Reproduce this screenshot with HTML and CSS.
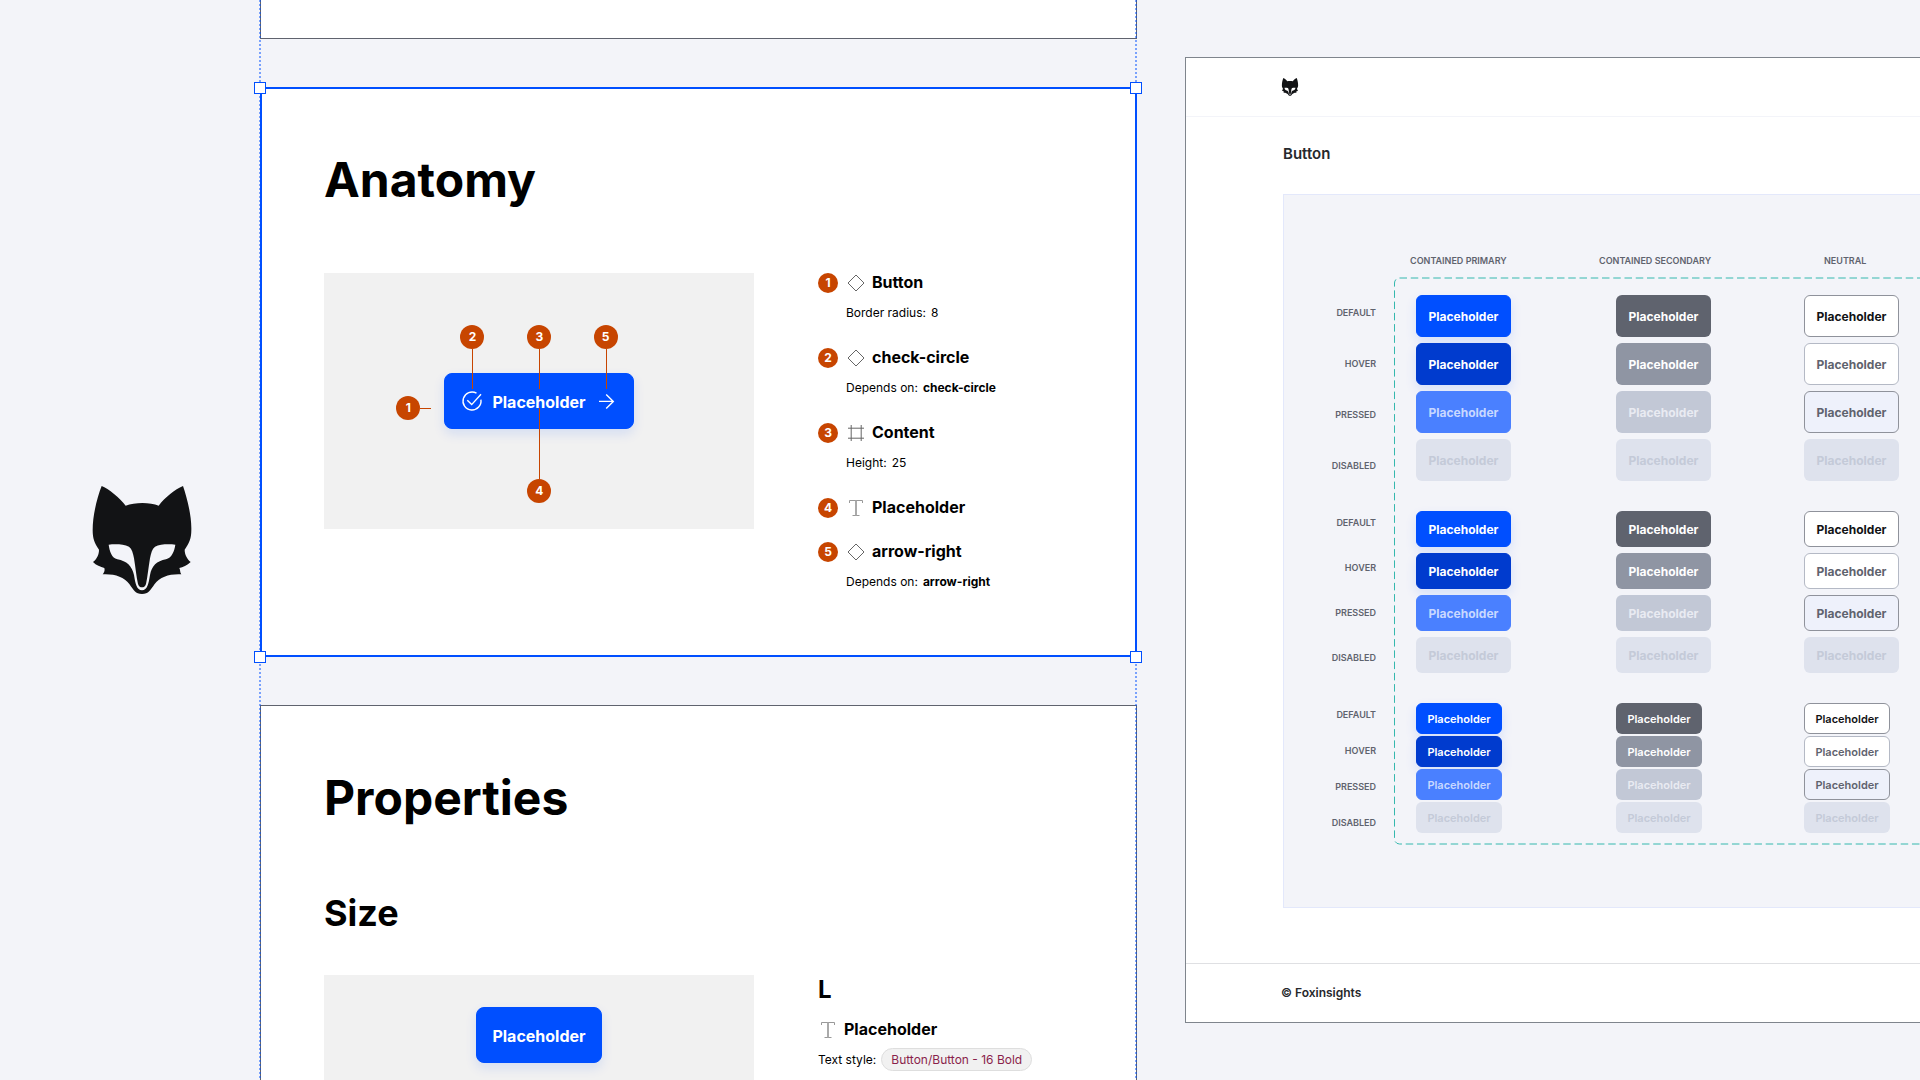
FILE: index.html
```html
<!DOCTYPE html>
<html lang="en">
<head>
    <meta charset="UTF-8">
    <meta name="viewport" content="width=device-width, initial-scale=1.0">
    <title>Foxinsights - Button</title>
    <link rel="stylesheet" href="styles.css">
</head>
<body>
    <!-- shared icons -->
    <svg class="sprite" aria-hidden="true">
        <symbol id="fox" viewBox="96 76 300 328">
            <path fill-rule="evenodd" d="M125 78C145 85 180 115 197 137C225 126 270 126 296 137C315 112 345 88 369 78C380 110 395 165 394 210C394 235 388 250 374 269C374 285 382 297 392 306C382 316 368 322 358 324C362 331 359 337 364 343C330 341 300 350 284 372C271 390 266 402 246 402C226 402 221 390 208 372C192 350 162 341 128 343C133 337 135 331 133 324C122 320 108 316 99 306C110 297 117 285 117 269C103 250 98 235 98 210C98 165 112 110 125 78ZM146 254C165 252 190 252 207 260C216 267 219 280 222 295C227 325 229 350 234 372C237 380 241 382 246 382C251 382 255 380 258 372C263 350 265 325 270 295C273 280 276 267 285 260C300 252 327 252 346 254C343 275 335 293 318 298C290 303 275 318 270 345C266 370 262 391 246 391C230 391 226 370 222 345C216 318 200 303 172 298C155 293 149 275 146 254Z"/>
        </symbol>
        <symbol id="diamond" viewBox="0 0 20 20">
            <path d="M10 2L18 10L10 18L2 10Z" fill="none" stroke="#666" stroke-width="1"/>
        </symbol>
        <symbol id="frame" viewBox="0 0 20 20">
            <path d="M5.2 2V18M15.2 2V18M2 5.2H18M2 15.2H18" fill="none" stroke="#666" stroke-width="1"/>
        </symbol>
        <symbol id="type" viewBox="0 0 20 20">
            <path d="M3.5 5V2.5H16.5V5M6.5 17.5H13.5" fill="none" stroke="#999" stroke-width="1"/>
            <path d="M10 2.5V17.5" fill="none" stroke="#aaa" stroke-width="2"/>
        </symbol>
    </svg>

    <div class="canvas">
        <aside class="brand">
            <svg class="brand-logo" role="img" aria-label="Foxinsights"><use href="#fox"/></svg>
        </aside>

        <main class="specs">
            <section class="card card-end"></section>

            <section class="card selected">
                <span class="handle top-left"></span>
                <span class="handle top-right"></span>
                <span class="handle bottom-left"></span>
                <span class="handle bottom-right"></span>
                <h1>Anatomy</h1>
                <div class="columns">
                    <div class="preview preview-anatomy">
                        <div class="specimen">
                            <button class="btn primary btn-xl">
                                <svg class="btn-icon" viewBox="0 0 24 24"><path d="M16.5 4.2A9 9 0 1 0 20.9 10.6M7.3 11.2L11.7 15.6L21 5.2"/></svg>
                                Placeholder
                                <svg class="btn-icon" viewBox="0 0 24 24"><path d="M5 12.4H19.5M12.2 5.4L19.3 12.4L12.2 19.4"/></svg>
                            </button>
                            <span class="badge pin pin-1">1</span>
                            <span class="badge pin pin-2">2</span>
                            <span class="badge pin pin-3">3</span>
                            <span class="badge pin pin-4">4</span>
                            <span class="badge pin pin-5">5</span>
                        </div>
                    </div>
                    <ul class="parts">
                        <li>
                            <h4><span class="badge">1</span><svg class="icon"><use href="#diamond"/></svg>Button</h4>
                            <p>Border radius: <span>8</span></p>
                        </li>
                        <li>
                            <h4><span class="badge">2</span><svg class="icon"><use href="#diamond"/></svg>check-circle</h4>
                            <p>Depends on: <b>check-circle</b></p>
                        </li>
                        <li>
                            <h4><span class="badge">3</span><svg class="icon"><use href="#frame"/></svg>Content</h4>
                            <p>Height: <span>25</span></p>
                        </li>
                        <li>
                            <h4><span class="badge">4</span><svg class="icon"><use href="#type"/></svg>Placeholder</h4>
                        </li>
                        <li>
                            <h4><span class="badge">5</span><svg class="icon"><use href="#diamond"/></svg>arrow-right</h4>
                            <p>Depends on: <b>arrow-right</b></p>
                        </li>
                    </ul>
                </div>
            </section>

            <section class="card">
                <h1>Properties</h1>
                <h2>Size</h2>
                <div class="columns">
                    <div class="preview preview-size">
                        <button class="btn primary btn-xl">Placeholder</button>
                    </div>
                    <div class="size-info">
                        <h3>L</h3>
                        <h4><svg class="icon"><use href="#type"/></svg>Placeholder</h4>
                        <p>Text style: <span class="chip">Button/Button - 16 Bold</span></p>
                    </div>
                </div>
            </section>
        </main>

        <article class="sheet">
            <header class="sheet-header">
                <svg class="sheet-logo" role="img" aria-label="Foxinsights"><use href="#fox"/></svg>
            </header>
            <div class="sheet-body">
                <h2>Button</h2>
                <div class="board">
                    <div class="variants">
                        <span>CONTAINED PRIMARY</span>
                        <span>CONTAINED SECONDARY</span>
                        <span>NEUTRAL</span>
                    </div>
                    <div class="matrix">
                        <div class="states">
                            <div class="state-group large">
                                <span>DEFAULT</span>
                                <span>HOVER</span>
                                <span>PRESSED</span>
                                <span>DISABLED</span>
                            </div>
                            <div class="state-group medium">
                                <span>DEFAULT</span>
                                <span>HOVER</span>
                                <span>PRESSED</span>
                                <span>DISABLED</span>
                            </div>
                            <div class="state-group small">
                                <span>DEFAULT</span>
                                <span>HOVER</span>
                                <span>PRESSED</span>
                                <span>DISABLED</span>
                            </div>
                        </div>
                        <div class="component-set">
                            <svg class="dashes" aria-hidden="true"><rect x="0.5" y="1" width="120%" height="566" rx="5"/></svg>
                            <div class="size-group large">
                                <button class="btn primary">Placeholder</button>
                                <button class="btn secondary">Placeholder</button>
                                <button class="btn neutral">Placeholder</button>
                                <button class="btn primary hover">Placeholder</button>
                                <button class="btn secondary hover">Placeholder</button>
                                <button class="btn neutral hover">Placeholder</button>
                                <button class="btn primary pressed">Placeholder</button>
                                <button class="btn secondary pressed">Placeholder</button>
                                <button class="btn neutral pressed">Placeholder</button>
                                <button class="btn" disabled>Placeholder</button>
                                <button class="btn" disabled>Placeholder</button>
                                <button class="btn" disabled>Placeholder</button>
                            </div>
                            <div class="size-group medium">
                                <button class="btn primary">Placeholder</button>
                                <button class="btn secondary">Placeholder</button>
                                <button class="btn neutral">Placeholder</button>
                                <button class="btn primary hover">Placeholder</button>
                                <button class="btn secondary hover">Placeholder</button>
                                <button class="btn neutral hover">Placeholder</button>
                                <button class="btn primary pressed">Placeholder</button>
                                <button class="btn secondary pressed">Placeholder</button>
                                <button class="btn neutral pressed">Placeholder</button>
                                <button class="btn" disabled>Placeholder</button>
                                <button class="btn" disabled>Placeholder</button>
                                <button class="btn" disabled>Placeholder</button>
                            </div>
                            <div class="size-group small">
                                <button class="btn primary">Placeholder</button>
                                <button class="btn secondary">Placeholder</button>
                                <button class="btn neutral">Placeholder</button>
                                <button class="btn primary hover">Placeholder</button>
                                <button class="btn secondary hover">Placeholder</button>
                                <button class="btn neutral hover">Placeholder</button>
                                <button class="btn primary pressed">Placeholder</button>
                                <button class="btn secondary pressed">Placeholder</button>
                                <button class="btn neutral pressed">Placeholder</button>
                                <button class="btn" disabled>Placeholder</button>
                                <button class="btn" disabled>Placeholder</button>
                                <button class="btn" disabled>Placeholder</button>
                            </div>
                        </div>
                    </div>
                </div>
            </div>
            <footer class="sheet-footer">© Foxinsights</footer>
        </article>
    </div>
</body>
</html>
```
FILE: styles.css
```css
* {
    box-sizing: border-box;
}
body {
    margin: 0;
    font-family: Inter, "Liberation Sans", sans-serif;
    background-color: #f3f4f9;
    color: #000;
}
h1, h2, h3, h4, p, ul {
    margin: 0;
    padding: 0;
}
.sprite {
    display: none;
}
.canvas {
    display: grid;
    grid-template-columns: 260px 877px 1fr;
    grid-template-rows: 100%;
    height: 100vh;
    overflow: hidden;
}

/* logo on the left */
.brand {
    display: flex;
    align-items: center;
    padding-left: 92px;
}
.brand-logo {
    width: 100px;
    height: 110px;
    fill: #121315;
}

/* spec cards */
.specs {
    position: relative;
    display: flex;
    flex-direction: column;
    gap: 48px;
}
.specs::before,
.specs::after {
    content: "";
    position: absolute;
    top: 0;
    bottom: 0;
    z-index: 1;
    width: 2px;
    background: repeating-linear-gradient(rgba(0, 79, 255, 0.5) 0 2px, transparent 2px 4px);
}
.specs::before {
    left: -1px;
}
.specs::after {
    right: 0;
}
.card {
    flex-shrink: 0;
    padding: 63px;
    background: white;
    border: 1px solid #5f636e;
}
.card-end {
    padding: 19px 63px;
    border-top: none;
}
.selected {
    position: relative;
    z-index: 2;
    padding: 62px;
    border: 2px solid #004fff;
}
.handle {
    position: absolute;
    width: 12px;
    height: 12px;
    background: white;
    border: 1px solid #004fff;
}
.top-left, .top-right {
    top: -7px;
}
.bottom-left, .bottom-right {
    bottom: -8px;
}
.top-left, .bottom-left {
    left: -8px;
}
.top-right, .bottom-right {
    right: -7px;
}
h1 {
    margin-bottom: 64px;
    font-size: 48px;
    line-height: 58px;
}
.card h2 {
    margin-bottom: 40px;
    font-size: 36px;
    line-height: 44px;
}
h3 {
    margin-bottom: 16px;
    font-size: 24px;
    line-height: 29px;
}
h4 {
    display: flex;
    align-items: flex-start;
    height: 20px;
    font-size: 16px;
    line-height: 18px;
}
.icon {
    width: 20px;
    height: 20px;
    margin-right: 6px;
}
.columns {
    display: flex;
    align-items: flex-start;
    gap: 64px;
}
.preview {
    display: flex;
    justify-content: center;
    width: 430px;
    background: #f1f1f1;
}
.preview-anatomy {
    align-items: center;
    height: 256px;
}
.preview-size {
    padding: 32px;
}
.badge {
    width: 20px;
    height: 20px;
    margin-right: 8px;
    border-radius: 50%;
    background: #c74500;
    color: white;
    font-size: 12px;
    font-weight: bold;
    line-height: 20px;
    text-align: center;
}

/* numbered pins around the button */
.specimen {
    position: relative;
}
.pin {
    position: absolute;
    width: 24px;
    height: 24px;
    margin: 0;
    line-height: 24px;
}
.pin::after {
    content: "";
    position: absolute;
    top: 24px;
    left: 12px;
    width: 1px;
    height: 40px;
    background: #c74500;
}
.pin-1 {
    top: 23px;
    left: -48px;
}
.pin-1::after {
    top: 12px;
    left: 24px;
    width: 11px;
    height: 1px;
}
.pin-2 {
    top: -48px;
    left: 16px;
}
.pin-3 {
    top: -48px;
    left: 83px;
}
.pin-4 {
    top: 106px;
    left: 83px;
}
.pin-4::after {
    top: -71px;
    height: 71px;
}
.pin-5 {
    top: -48px;
    right: 16px;
}
.parts {
    display: flex;
    flex-direction: column;
    gap: 24px;
    list-style: none;
}
.parts p {
    display: flex;
    gap: 5px;
    margin: 10px 0 2px 28px;
    font-size: 12px;
    line-height: 19px;
}
.size-info p {
    display: flex;
    align-items: center;
    gap: 5px;
    margin-top: 8px;
    font-size: 12px;
}
.chip {
    padding: 0 9px;
    border: 1px solid #dedede;
    border-radius: 12px;
    background: #f1f1f1;
    color: #8a1f4b;
    line-height: 21px;
}

/* buttons */
.btn {
    display: flex;
    align-items: center;
    justify-content: center;
    gap: 8px;
    height: 42px;
    padding: 0 12px;
    border: 1px solid transparent;
    border-radius: 6px;
    font-family: inherit;
    font-size: 12px;
    font-weight: bold;
    color: white;
    cursor: pointer;
}
.btn-xl {
    height: 56px;
    padding: 2px 15px 0;
    border-radius: 8px;
    font-size: 16px;
}
.btn-icon {
    width: 24px;
    height: 24px;
    margin-top: -2px;
    fill: none;
    stroke: white;
    stroke-width: 1.4;
}
.primary {
    background: #004fff;
    border-color: #004fff;
    box-shadow: 0 5px 12px rgba(0, 79, 255, 0.12);
}
.primary.hover {
    background: #003bce;
    border-color: #003bce;
}
.primary.pressed {
    background: #4a80ff;
    border-color: #4a80ff;
    color: #c8d8ff;
    box-shadow: none;
}
.secondary {
    background: #5f636e;
}
.secondary.hover {
    background: #8f95a3;
}
.secondary.pressed {
    background: #c2c8d6;
    color: #e9ebf2;
}
.neutral {
    background: white;
    border-color: #8f929b;
    color: #121315;
}
.neutral.hover {
    border-color: #b4b9c5;
    color: #5f636e;
}
.neutral.pressed {
    background: #eef1fb;
    color: #5f636e;
}
.btn:disabled {
    background: #dee2ed;
    color: #c4cad8;
    cursor: default;
}

/* button sheet on the right */
.sheet {
    align-self: start;
    min-width: 0;
    margin: 57px 0 0 48px;
    background: white;
    border: 1px solid #7f858d;
    border-right: none;
}
.sheet-header {
    display: flex;
    align-items: center;
    height: 59px;
    padding-left: 95px;
    border-bottom: 1px solid #f3f4f9;
}
.sheet-logo {
    width: 18px;
    height: 18px;
    fill: #121315;
}
.sheet-body {
    padding: 25px 0 55px 97px;
}
.sheet-body h2 {
    margin-bottom: 28px;
    color: #26282c;
    font-size: 15px;
    font-weight: 600;
    line-height: 24px;
}
.board {
    padding: 60px 0 62px;
    background: #f3f4f9;
    border: 1px solid #e3e8fb;
    border-right: none;
}
.variants {
    display: grid;
    grid-template-columns: 189px 225px 1fr;
    margin: 0 0 10px 126px;
}
.variants span,
.state-group span {
    color: #5f636e;
    font-size: 9px;
    font-weight: 600;
    line-height: 12px;
    white-space: nowrap;
}
.matrix {
    display: flex;
}
.states {
    display: flex;
    flex-direction: column;
    gap: 45px;
    width: 92px;
    margin-right: 18px;
    padding-top: 30px;
}
.state-group {
    display: flex;
    flex-direction: column;
    align-items: flex-end;
}
.state-group.large {
    gap: 39px;
}
.state-group.medium {
    gap: 33px;
}
.state-group.small {
    gap: 24px;
}
.component-set {
    position: relative;
    display: flex;
    flex: 1;
    flex-direction: column;
    gap: 30px;
    min-width: 0;
    padding: 18px 0 12px 22px;
}
.dashes {
    position: absolute;
    top: 0;
    left: 0;
    width: 100%;
    height: 100%;
    fill: none;
    stroke: #35b8ae;
    stroke-dasharray: 7.5 3.75;
    pointer-events: none;
}
.size-group {
    display: grid;
    grid-template-columns: 200px 188px 1fr;
    justify-items: start;
    row-gap: 6px;
}
.size-group .btn {
    width: 95px;
}
.size-group.medium .btn {
    height: 36px;
}
.size-group.small {
    row-gap: 2px;
}
.size-group.small .btn {
    width: 86px;
    height: 31px;
    font-size: 11px;
    font-weight: 600;
}
.sheet-footer {
    padding-left: 95px;
    border-top: 1px solid #dfe0e3;
    color: #26282c;
    font-size: 12px;
    font-weight: 600;
    line-height: 58px;
}
```
